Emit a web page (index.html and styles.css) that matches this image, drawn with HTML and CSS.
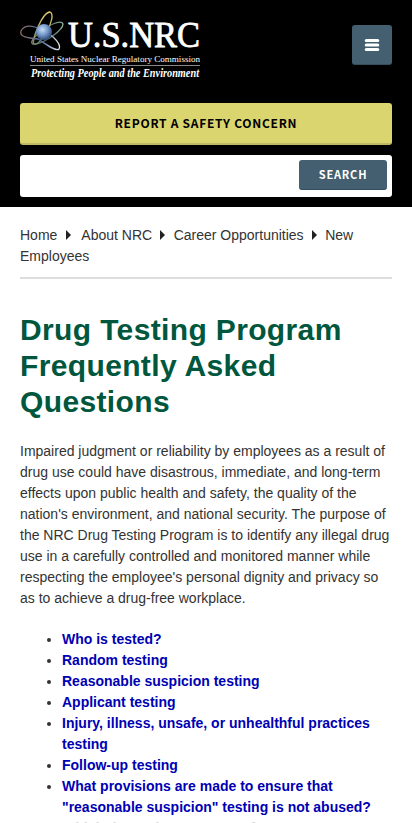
FILE: index.html
```html
<!DOCTYPE html>
<html lang="en">
<head>
<meta charset="utf-8">
<meta name="viewport" content="width=device-width, initial-scale=1">
<title>Drug Testing Program Frequently Asked Questions</title>
<link rel="stylesheet" href="styles.css">
</head>
<body>
<header class="site-header">
  <div class="brand-row">
    <svg class="logo" width="190" height="76" viewBox="0 0 190 76" role="img" aria-label="U.S.NRC">
      <defs>
        <radialGradient id="core" cx="40%" cy="35%" r="65%">
          <stop offset="0" stop-color="#c9def5"/>
          <stop offset=".5" stop-color="#799dce"/>
          <stop offset="1" stop-color="#304e7c"/>
        </radialGradient>
        <linearGradient id="flat" x1="0" x2="1"><stop offset="0" stop-color="#a07b70"/><stop offset=".5" stop-color="#48665c"/><stop offset="1" stop-color="#8db5a2"/></linearGradient>
        <linearGradient id="tall" x1="0" x2="0" y1="0" y2="1"><stop offset="0" stop-color="#e4d36b"/><stop offset=".5" stop-color="#b5a25c"/><stop offset="1" stop-color="#55987a"/></linearGradient>
        <linearGradient id="tilt" x1="0" x2="1"><stop offset="0" stop-color="#8f6866"/><stop offset=".55" stop-color="#4f71ab"/><stop offset="1" stop-color="#e5e6e9"/></linearGradient>
      </defs>
      <g fill="none" stroke-width="1.3">
        <path d="M43 17C41 12 28 18 18 27C10 34 10 38 16 37C26 35 43 23 43 17Z" stroke="url(#flat)"/>
        <path d="M30 5C22 5 11 35 14 37C20 40 38 9 30 5Z" stroke="url(#tall)"/>
        <path d="M1 24C-1 30 8 31 18 32C27 38 36 45 39 42C42 36 29 24 15 20C8 18 3 20 1 24Z" stroke="url(#tilt)"/>
      </g>
      <circle cx="24" cy="25" r="8" fill="url(#core)"/>
      <g fill="#fff" font-family="'Liberation Serif', serif">
        <text x="48" y="40" font-size="36" textLength="132" lengthAdjust="spacingAndGlyphs" stroke="#fff" stroke-width=".8">U.S.NRC</text>
        <text x="10" y="54.500" font-size="8.500" textLength="170" lengthAdjust="spacingAndGlyphs">United States Nuclear Regulatory Commission</text>
        <text x="11" y="70" font-size="11.500" font-style="italic" font-weight="bold" textLength="168" lengthAdjust="spacingAndGlyphs">Protecting People and the Environment</text>
      </g>
      <path d="M10 58.500H180" stroke="#aaa" stroke-width=".8"/>
    </svg>
    <button class="menu-button" aria-label="Menu">
      <svg width="16" height="14" viewBox="0 0 16 14"><path d="M2.200 2.500h11.600M2.200 7h11.600M2.200 11.500h11.600" stroke="#fff" stroke-width="3" stroke-linecap="round"/></svg>
    </button>
  </div>
  <a class="report-button">Report a Safety Concern</a>
  <form class="search">
    <input class="search-input" aria-label="Search site">
    <button class="search-button" type="button">Search</button>
  </form>
</header>
<main class="content">
  <nav class="breadcrumb"><span>Home</span><i class="arrow arrow-first"></i><span>About NRC</span><i class="arrow"></i><span>Career Opportunities</span><i class="arrow"></i><span>New Employees</span></nav>
  <h1>Drug Testing Program Frequently Asked Questions</h1>
  <p>Impaired judgment or reliability by employees as a result of drug use could have disastrous, immediate, and long-term effects upon public health and safety, the quality of the nation's environment, and national security. The purpose of the NRC Drug Testing Program is to identify any illegal drug use in a carefully controlled and monitored manner while respecting the employee's personal dignity and privacy so as to achieve a drug-free workplace.</p>
  <ul class="topics">
    <li><a>Who is tested?</a></li>
    <li><a>Random testing</a></li>
    <li><a>Reasonable suspicion testing</a></li>
    <li><a>Applicant testing</a></li>
    <li><a>Injury, illness, unsafe, or unhealthful practices testing</a></li>
    <li><a>Follow-up testing</a></li>
    <li><a>What provisions are made to ensure that "reasonable suspicion" testing is not abused?</a></li>
    <li class="faded"><a>Which drugs does NRC test for?</a></li>
  </ul>
</main>
</body>
</html>
```
FILE: styles.css
```css
* { box-sizing: border-box; }
html { height: 100%; overflow: hidden; }
body {
  height: 100%;
  margin: 0;
  overflow: hidden;
  background: #fff;
  color: #333;
  font: 14px/21px "Liberation Sans", Arial, sans-serif;
}
.site-header {
  height: 207px;
  padding: 7px 20px 10px;
  background: #000;
}
.brand-row {
  display: flex;
  justify-content: space-between;
  height: 96px;
}
.logo { display: block; overflow: visible; }
.menu-button {
  display: flex;
  align-items: center;
  justify-content: center;
  width: 40px;
  height: 40px;
  margin-top: 18px;
  padding: 0;
  border: 0;
  border-bottom: 1px solid #344d5a;
  border-radius: 3px;
  background: #435f70;
}
.report-button, .search-button {
  font-family: "Noto Sans CJK SC", sans-serif;
  font-weight: 700;
  text-transform: uppercase;
}
.report-button {
  display: flex;
  align-items: center;
  justify-content: center;
  height: 42px;
  padding-bottom: 2px;
  border-bottom: 2px solid #bfb965;
  border-radius: 3px;
  background: #dbd570;
  color: #000;
  font-size: 12px;
  letter-spacing: .72px;
}
.search {
  display: flex;
  align-items: flex-start;
  height: 42px;
  margin-top: 10px;
  padding: 5px;
  border-radius: 3px;
  background: #fff;
}
.search-input {
  flex: 1;
  min-width: 0;
  height: 30px;
  border: 0;
  background: transparent;
}
.search-button {
  width: 88px;
  height: 30px;
  padding: 0 0 1px;
  border: 0;
  border-bottom: 1px solid #344d5a;
  border-radius: 3px;
  background: #435f70;
  color: #fff;
  font-size: 11px;
  letter-spacing: .8px;
}
.content { padding: 18px 20px 0; }
.breadcrumb {
  height: 54px;
  border-bottom: 2px solid #ddd;
}
.arrow {
  display: inline-block;
  margin: 0 8px;
  border-left: 5px solid #222;
  border-top: 5px solid transparent;
  border-bottom: 5px solid transparent;
}
.arrow { margin-right: 8.500px; }
.arrow-first { margin: 0 10px 0 9px; }
h1 {
  margin: 33px 0 21px;
  color: #00573d;
  font-size: 30px;
  line-height: 36px;
  letter-spacing: .36px;
}
p { margin: 0 0 20px; }
.topics { margin: 0; padding-left: 42px; }
.topics a { color: #0000b3; font-weight: 700; }
.topics .faded a { color: #d8d8d8; }
.topics .faded::marker { color: transparent; }
```
